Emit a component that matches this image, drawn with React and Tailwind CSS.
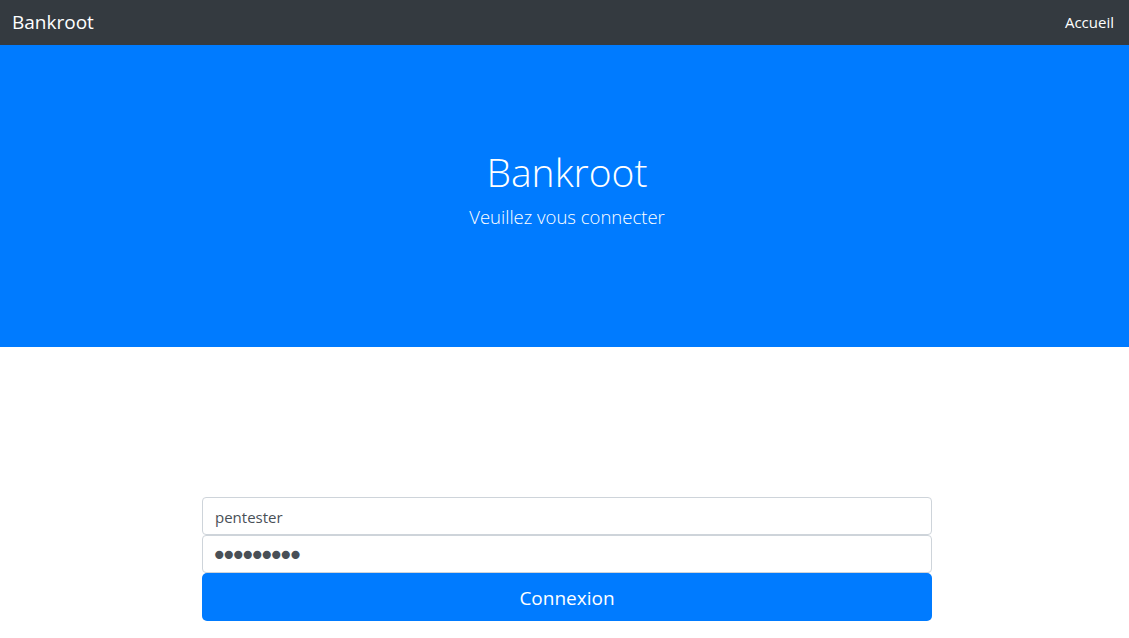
export default function App() {
  const font = { fontFamily: '"Open Sans", "Noto Sans", sans-serif' };
  return (
    <div className="min-h-[638px] bg-white" style={font}>
      {/* navbar */}
      <nav className="h-[45px] bg-[#343a40] flex items-center justify-between pl-3 pr-[15px]">
        <span className="text-[19px] text-white leading-none">Bankroot</span>
        <span className="text-[15px] text-white leading-none">Accueil</span>
      </nav>

      {/* jumbotron */}
      <div className="h-[302px] bg-[#007bff] flex flex-col items-center pl-[5px] pt-[107px] text-white">
        <h1 className="text-[39px] font-light leading-none">Bankroot</h1>
        <p className="mt-[17px] text-[18.5px] font-light leading-none">Veuillez vous connecter</p>
      </div>

      {/* login form */}
      <div className="flex justify-center pl-[5px] pt-[150px]">
        <form className="w-[730px] flex flex-col" onSubmit={e => e.preventDefault()}>
          <input
            type="text"
            defaultValue="pentester"
            className="h-[38px] px-3 pt-[2px] border border-[#ced4da] rounded-[4px] text-[15px] text-[#495057] outline-none"
          />
          <input
            type="password"
            defaultValue="123456789"
            style={{ fontFamily: '"DejaVu Sans", sans-serif' }}
            className="h-[38px] pl-2 pr-3 pt-[4px] border border-[#ced4da] rounded-[4px] text-[28px] tracking-[-7px] text-[#495057] outline-none"
          />
          <button
            type="submit"
            className="h-[48px] pt-[3px] bg-[#007bff] text-white text-[19px] rounded-[5px]"
          >
            Connexion
          </button>
        </form>
      </div>
    </div>
  );
}
